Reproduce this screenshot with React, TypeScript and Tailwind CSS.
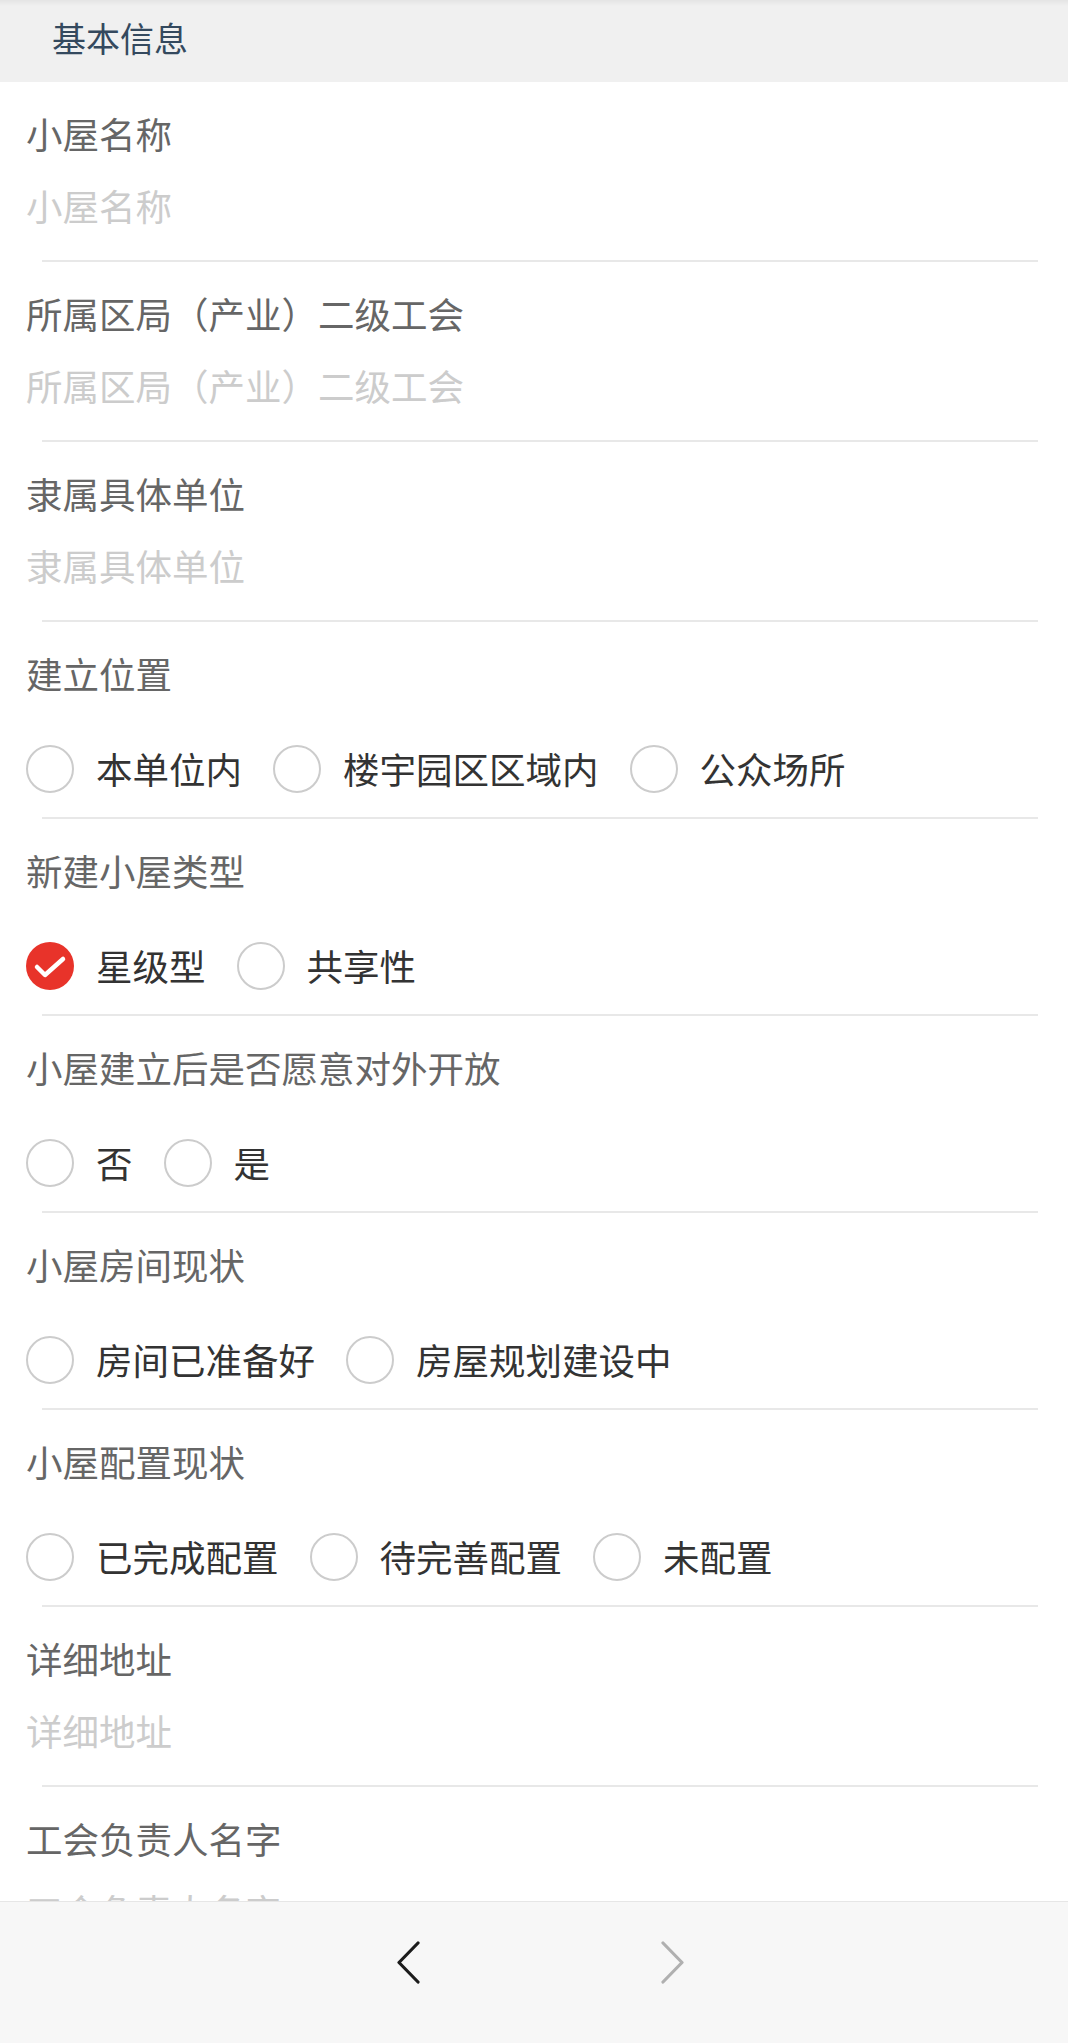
const font = { fontFamily: '"Noto Sans CJK SC", "Noto Sans", sans-serif' };

type Field =
  | { kind: "text"; label: string }
  | { kind: "radio"; label: string; options: string[]; checked?: number };

const fields: Field[] = [
  { kind: "text", label: "小屋名称" },
  { kind: "text", label: "所属区局（产业）二级工会" },
  { kind: "text", label: "隶属具体单位" },
  { kind: "radio", label: "建立位置", options: ["本单位内", "楼宇园区区域内", "公众场所"] },
  { kind: "radio", label: "新建小屋类型", options: ["星级型", "共享性"], checked: 0 },
  { kind: "radio", label: "小屋建立后是否愿意对外开放", options: ["否", "是"] },
  { kind: "radio", label: "小屋房间现状", options: ["房间已准备好", "房屋规划建设中"] },
  { kind: "radio", label: "小屋配置现状", options: ["已完成配置", "待完善配置", "未配置"] },
  { kind: "text", label: "详细地址" },
  { kind: "text", label: "工会负责人名字" },
];

function Radio({ checked }: { checked?: boolean }) {
  if (checked) {
    return (
      <span className="flex h-[48px] w-[48px] shrink-0 items-center justify-center rounded-full bg-[#e8332a]">
        <svg width="48" height="48" viewBox="0 0 48 48">
          <polyline
            points="11,25 19,33 37,17"
            fill="none"
            stroke="#ffffff"
            strokeWidth="4.5"
            strokeLinecap="round"
            strokeLinejoin="round"
          />
        </svg>
      </span>
    );
  }
  return <span className="h-[48px] w-[48px] shrink-0 rounded-full border-2 border-[#cccccc]" />;
}

function FieldBlock({ field }: { field: Field }) {
  return (
    <div>
      <div className={field.kind === "text" ? "px-[26px] pt-[27px] pb-[29px]" : "px-[26px] pt-[27px] pb-[24px]"}>
        <div className="text-[36.5px] leading-[50px] text-[#666666]">{field.label}</div>
        {field.kind === "text" ? (
          <div className="mt-[22px] text-[36.5px] leading-[50px] text-[#cccccc]">{field.label}</div>
        ) : (
          <div className="mt-[46px] flex items-center">
            {field.options.map((opt, i) => (
              <label key={opt} className="mr-[31px] flex items-center gap-[22px]">
                <Radio checked={field.checked === i} />
                <span className="text-[36.5px] leading-[48px] text-[#333333]">{opt}</span>
              </label>
            ))}
          </div>
        )}
      </div>
      <div className="ml-[42px] mr-[30px] h-[2px] bg-[#e8e8e8]" />
    </div>
  );
}

function Chevron({ dir, color }: { dir: "left" | "right"; color: string }) {
  const pts = dir === "left" ? "21,2 2,21.5 21,41" : "2,2 21,21.5 2,41";
  return (
    <svg width="23" height="43" viewBox="0 0 23 43">
      <polyline points={pts} fill="none" stroke={color} strokeWidth="3.2" strokeLinecap="round" strokeLinejoin="round" />
    </svg>
  );
}

export default function App() {
  return (
    <div className="flex h-screen flex-col overflow-hidden bg-white" style={font}>
      <div className="min-h-0 flex-1 overflow-hidden">
        <div className="h-[82px] bg-[linear-gradient(#e4e4e4,#f0f0f0_6px)] pt-[16px] pl-[52px]">
          <span className="text-[34px] leading-[44px] text-[#34495e]">基本信息</span>
        </div>
        {fields.map((f) => (
          <FieldBlock key={f.label} field={f} />
        ))}
      </div>
      <div className="flex h-[142px] shrink-0 justify-center gap-[241px] border-t border-[#e6e6e6] bg-[#f7f7f7] pt-[39px] pl-[12px]">
        <button className="h-[43px]">
          <Chevron dir="left" color="#1c1c1c" />
        </button>
        <button className="h-[43px]">
          <Chevron dir="right" color="#b0b0b0" />
        </button>
      </div>
    </div>
  );
}
